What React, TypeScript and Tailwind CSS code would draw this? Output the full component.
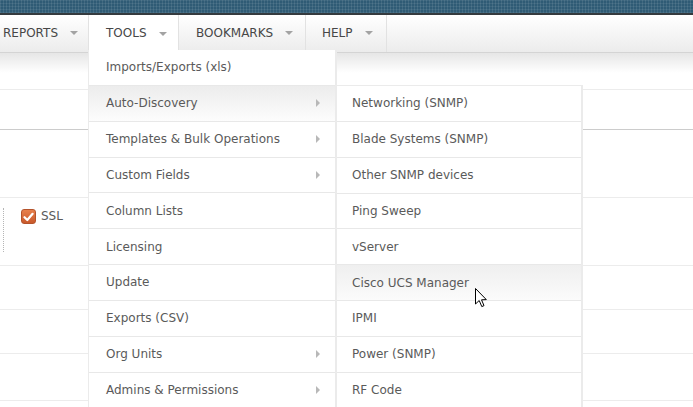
import React from "react";

const mainItems: { label: string; sub?: boolean; hover?: boolean }[] = [
  { label: "Imports/Exports (xls)" },
  { label: "Auto-Discovery", sub: true, hover: true },
  { label: "Templates & Bulk Operations", sub: true },
  { label: "Custom Fields", sub: true },
  { label: "Column Lists" },
  { label: "Licensing" },
  { label: "Update" },
  { label: "Exports (CSV)" },
  { label: "Org Units", sub: true },
  { label: "Admins & Permissions", sub: true },
];

const subItems: { label: string; hover?: boolean }[] = [
  { label: "Networking (SNMP)" },
  { label: "Blade Systems (SNMP)" },
  { label: "Other SNMP devices" },
  { label: "Ping Sweep" },
  { label: "vServer" },
  { label: "Cisco UCS Manager", hover: true },
  { label: "IPMI" },
  { label: "Power (SNMP)" },
  { label: "RF Code" },
];

function NavArrow() {
  return (
    <span className="inline-block w-0 h-0 border-l-[4px] border-r-[4px] border-t-[4px] border-l-transparent border-r-transparent border-t-[#a3a3a3] mt-[1px]" />
  );
}

function SubArrow() {
  return (
    <span className="inline-block w-0 h-0 border-t-[4px] border-b-[4px] border-l-[4px] border-t-transparent border-b-transparent border-l-[#b8b8b8]" />
  );
}

export default function App() {
  return (
    <div className="relative w-[693px] h-[407px] overflow-hidden bg-white font-['DejaVu_Sans',sans-serif] text-[12px] text-[#5a5a5a]">
      {/* top bar */}
      <div className="h-[13px] bg-[#2f5b75] bg-[repeating-linear-gradient(90deg,rgba(255,255,255,0.09)_0px,rgba(255,255,255,0.09)_1px,transparent_1px,transparent_3px),repeating-linear-gradient(0deg,rgba(255,255,255,0.07)_0px,rgba(255,255,255,0.07)_1px,transparent_1px,transparent_3px)]" />
      <div className="h-[2px] bg-[#343a3e]" />

      {/* nav bar */}
      <nav className="h-[38px] flex bg-gradient-to-b from-white to-[#ececec] border-b border-[#d4d4d4] text-[#474747]">
        <div className="ml-[-14px] w-[103px] flex items-center gap-[12px] pl-[17px] pb-[2px] border-r border-[#e2e2e2]">
          <span>REPORTS</span>
          <NavArrow />
        </div>
        <div className="w-[90px] flex items-center gap-[12px] pl-[17px] pb-[2px] border-r border-[#e2e2e2] bg-white relative z-10 h-[38px]">
          <span>TOOLS</span>
          <NavArrow />
        </div>
        <div className="w-[127px] flex items-center gap-[12px] pl-[17px] pb-[2px] border-r border-[#e2e2e2]">
          <span>BOOKMARKS</span>
          <NavArrow />
        </div>
        <div className="w-[81px] flex items-center gap-[12px] pl-[16px] pb-[2px] border-r border-[#e2e2e2]">
          <span>HELP</span>
          <NavArrow />
        </div>
      </nav>

      {/* background page rows */}
      <div className="h-[37px] bg-[linear-gradient(#e6e6e6,#ffffff_55%)] border-b border-[#ececec]" />
      <div className="h-[40px] border-b border-[#cccccc]" />
      <div className="h-[68px] border-b border-[#ececec]" />
      <div className="h-[68px] border-b border-[#ececec] flex items-start pt-[10px]">
        <div className="ml-[3px] w-0 h-[44px] border-l border-dotted border-[#b5b5b5]" />
        <div className="ml-[17px] mt-[1px] w-[15px] h-[15px] rounded-[3px] border border-[#b4532b] bg-gradient-to-b from-[#e8804c] to-[#c9592b] flex items-center justify-center">
          <svg width="11" height="10" viewBox="0 0 11 10">
            <path d="M1.5 5.2 L4.3 8 L9.6 1.8" fill="none" stroke="#ffffff" strokeWidth="2.2" strokeLinecap="round" strokeLinejoin="round" />
          </svg>
        </div>
        <span className="ml-[5px] leading-[16px]">SSL</span>
      </div>
      <div className="h-[44px] border-b border-[#ececec]" />
      <div className="h-[44px] border-b border-[#ececec]" />
      <div className="h-[47px] border-b border-[#ececec]" />

      {/* main dropdown */}
      <div className="absolute left-[88px] top-[50px] w-[249px] bg-white border-l border-r-2 border-[#ebebeb] z-20">
        {mainItems.map((it) => (
          <div
            key={it.label}
            className={
              "h-[35.85px] flex items-center justify-between pl-[17px] pr-[15px] border-b border-[#e8e8e8] " +
              (it.hover ? "bg-gradient-to-b from-[#ececec] to-[#fdfdfd]" : "bg-white")
            }
          >
            <span>{it.label}</span>
            {it.sub ? <SubArrow /> : null}
          </div>
        ))}
      </div>

      {/* submenu */}
      <div className="absolute left-[337px] top-[85px] w-[246px] bg-white border-t border-r-2 border-[#ebebeb] z-20">
        {subItems.map((it) => (
          <div
            key={it.label}
            className={
              "h-[35.85px] flex items-center pl-[15px] border-b border-[#e8e8e8] " +
              (it.hover ? "bg-gradient-to-b from-[#efefef] to-[#fbfbfb]" : "bg-white")
            }
          >
            <span>{it.label}</span>
          </div>
        ))}
      </div>

      {/* mouse cursor */}
      <svg className="absolute left-[475px] top-[288px] z-30" width="13" height="20" viewBox="0 0 13 20">
        <path d="M0.5 0.5 L0.5 16 L4.2 12.5 L6.8 18.6 L9 17.6 L6.5 11.8 L11.3 11.6 Z" fill="#ffffff" stroke="#000000" strokeWidth="1" strokeLinejoin="miter" />
      </svg>
    </div>
  );
}
